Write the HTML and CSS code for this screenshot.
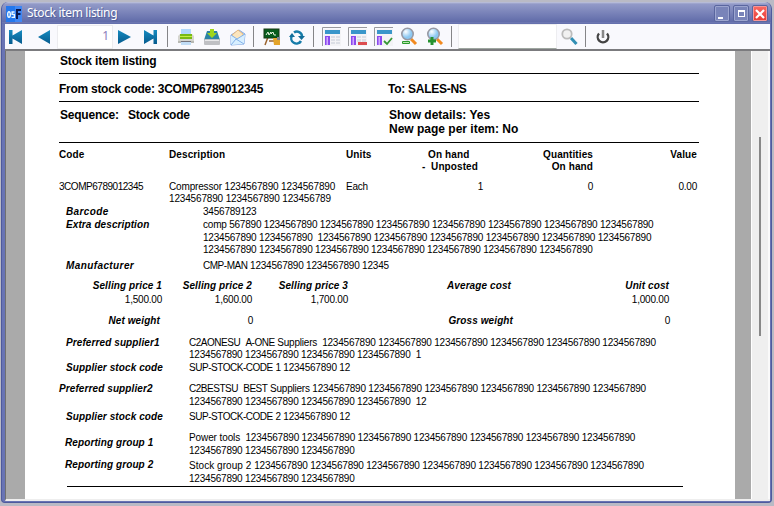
FILE: index.html
```html
<!DOCTYPE html>
<html lang="en">
<head>
<meta charset="utf-8">
<title>Stock item listing</title>
<link rel="stylesheet" href="styles.css">
</head>
<body>
<div class="window">
<header class="titlebar">
<svg class="logo" width="16" height="16" viewBox="0 0 16 16"><rect width="16" height="16" fill="#2377ed"/><rect x="9" width="7" height="16" fill="#4187f3"/><g fill="none" stroke="#eaf7ff" stroke-width="1.4"><ellipse cx="3" cy="8.5" rx="1.3" ry="2.8"/><path d="M8.6 6H6.1v2.4h2.2v3H5.5"/></g><path d="M11 13V4h4M11 8h3.5" fill="none" stroke="#0a174b" stroke-width="2"/></svg>
<h1>Stock item listing</h1>
<span class="win-btn"><i class="min"></i></span><span class="win-btn"><i class="max"></i></span><span class="win-btn close"><svg width="10" height="10" viewBox="0 0 10 10"><path d="M1 1l8 8M9 1L1 9" stroke="#fff" stroke-width="2.2"/></svg></span>
</header>
<nav class="toolbar">
<svg class="defs"><defs>
<linearGradient id="blue" x2="0" y2="1"><stop stop-color="#168bc0"/><stop offset="1" stop-color="#075b8e"/></linearGradient>
<radialGradient id="lens" cx=".35" cy=".3"><stop stop-color="#fff"/><stop offset="1" stop-color="#8cc8f2"/></radialGradient>
</defs></svg>
<svg class="first" width="14" height="16" viewBox="0 0 14 16"><path d="M0 1h3.5v5.5L13 1v14L3.5 9.500V15H0z" fill="url(#blue)"/></svg>
<svg class="prev" width="12" height="14" viewBox="0 0 12 14"><path d="M12 0v14L0 7z" fill="url(#blue)"/></svg>
<span class="page-no">1</span>
<svg class="next" width="13" height="14" viewBox="0 0 13 14"><path d="M0 0l13 7-13 7z" fill="url(#blue)"/></svg>
<svg class="last" width="13" height="16" viewBox="0 0 13 16"><path d="M13 1H9.500v5.500L0 1v14l9.500-5.500V15H13z" fill="url(#blue)"/></svg>
<i class="sep s1"></i>
<svg class="ic print" width="18" height="18" viewBox="0 0 18 18"><rect x="4" y="1" width="10" height="8" fill="#b1d8fb"/><path d="M1 8l2-2v3h12V6l2 2v7H1z" fill="#d5d5cf"/><path d="M3 6h12v5H3z" fill="#79ba14"/><path d="M3 8h12v1H3z" fill="#c5ed45"/><path d="M1 13h16v2H1z" fill="#b8b9b3"/><path d="M4 13h10v4H4z" fill="#c1ddf6"/><path d="M4 13h10v1H4z" fill="#74747d"/></svg>
<svg class="ic save" width="18" height="18" viewBox="0 0 18 18"><path d="M4 3h10l3 9H1z" fill="#2b83a6"/><rect x="1" y="11" width="16" height="6" rx="1" fill="#bfc0c4"/><path d="M2 12h14v1H2z" fill="#e8e8ea"/><path d="M7 1h4v4h3L9 10 4 5h3z" fill="#9fd51b"/></svg>
<svg class="ic mail" width="18" height="18" viewBox="0 0 18 18"><path d="M2 7l8-5 6 4-1 10-13 1z" fill="#b5dcf8" stroke="#88a9e3"/><path d="M3 7l6-5 5 4v4l-7 2-3-3z" fill="#fbe5be" stroke="#ebaf64" stroke-width=".8"/><path d="M2 7l6 4 8-5-1 10-13 1z" fill="#d8efff"/><path d="M2 7l6 4 8-5M2 17l5-6 8 5" fill="none" stroke="#82b0e8"/></svg>
<i class="sep s2"></i>
<svg class="ic board" width="18" height="18" viewBox="0 0 18 18"><path d="M5 9L2 17m4-4h7" stroke="#9b642f" stroke-width="1.5"/><rect x="1" y="1" width="15" height="9" fill="#075c1d" stroke="#163914"/><path d="M3 7l2-3 1 3 2-3v2l2-2 1 3h2" fill="none" stroke="#e6f3df"/><path d="M10 10h7v7h-6z" fill="#e4a42a"/><path d="M14 9h3v3h-3z" fill="#7b8394"/></svg>
<svg class="ic refresh" width="18" height="18" viewBox="0 0 18 18"><g fill="none" stroke="#177ca9" stroke-width="2.500"><path d="M5 4.500a5 5 0 0 1 8 4"/><path d="M3 7.500A5 5 0 0 0 12 13"/></g><path d="M9 8h7l-3.500 4zM0 9l3-4 3 4z" fill="#126d99"/></svg>
<i class="sep s3"></i>
<svg class="ic lay" width="19" height="19" viewBox="0 0 19 19"><path d="M.5 19V.5H19" fill="none" stroke="#98999e"/><rect x="2" y="2" width="17" height="17" fill="#f3f3f6"/><rect x="3" y="3" width="15" height="4" fill="#3996ca"/><rect x="3" y="9" width="5" height="9" fill="#8b4aee"/><rect x="4.500" y="10" width="1.500" height="8" fill="#d1aaff"/><rect x="9" y="9" width="9" height="8" fill="#dcdfe6"/><path d="M9 11.500h9M9 14.500h9M13.500 9v8" stroke="#f3f3f6"/></svg>
<svg class="ic lay" width="19" height="19" viewBox="0 0 19 19"><path d="M.5 19V.5H19" fill="none" stroke="#98999e"/><rect x="2" y="2" width="17" height="17" fill="#f3f3f6"/><rect x="3" y="3" width="15" height="4" fill="#3996ca"/><rect x="3" y="9" width="5" height="9" fill="#8b4aee"/><rect x="4.500" y="10" width="1.500" height="8" fill="#d1aaff"/><rect x="9" y="9" width="9" height="6" fill="#dcdfe6"/><path d="M9 11.500h9M13.500 9v6" stroke="#f3f3f6"/><rect x="10" y="15" width="9" height="3" fill="#dc4d50"/></svg>
<svg class="ic lay" width="19" height="19" viewBox="0 0 19 19"><path d="M.5 19V.5H19" fill="none" stroke="#98999e"/><rect x="2" y="2" width="17" height="17" fill="#f3f3f6"/><rect x="3" y="3" width="15" height="4" fill="#3996ca"/><rect x="3" y="9" width="5" height="9" fill="#8b4aee"/><rect x="4.500" y="10" width="1.500" height="8" fill="#d1aaff"/><path d="M10 14l3 3 5-6" fill="none" stroke="#369734" stroke-width="1.800"/></svg>
<svg class="ic zoomout" width="18" height="19" viewBox="0 0 18 19"><path d="M11 12l5 5" stroke="#f28a20" stroke-width="3"/><circle cx="7.500" cy="7" r="5.700" fill="url(#lens)" stroke="#9899a4" stroke-width="1.600"/><rect x="2" y="14" width="8" height="3" rx="1" fill="#2b9a2c"/><path d="M3 15.500h6" stroke="#b8e7af"/></svg>
<svg class="ic zoomin" width="18" height="19" viewBox="0 0 18 19"><path d="M11 12l5 5" stroke="#f28a20" stroke-width="3"/><circle cx="7.500" cy="7" r="5.700" fill="url(#lens)" stroke="#9899a4" stroke-width="1.600"/><path d="M2 14h8M6 10v8" stroke="#279230" stroke-width="3"/></svg>
<i class="sep s4"></i>
<span class="search-box"></span>
<svg class="ic find" width="17" height="17" viewBox="0 0 17 17"><path d="M10 10l5.500 6" stroke="#328fb4" stroke-width="3"/><circle cx="6" cy="6" r="4.700" fill="#f1f1f1" stroke="#bcbcbc" stroke-width="1.800"/></svg>
<i class="sep s5"></i>
<svg class="ic power" width="14" height="15" viewBox="0 0 14 15"><path d="M3 4.500a5.300 5.300 0 1 0 8 0" fill="none" stroke="#444" stroke-width="2.300"/><path d="M7 1v8" stroke="#888" stroke-width="2.500"/></svg>
</nav>
<main class="viewer">
<article class="page">
<section class="head">
<h2>Stock item listing</h2>
<div class="pair range"><b class="from">From stock code: 3COMP6789012345</b><b class="to">To: SALES-NS</b></div>
<div class="pair opts"><b class="sequence">Sequence:&nbsp; <span class="seq">Stock code</span></b><b>Show details: Yes<br>New page per item: No</b></div>
</section>
<div class="cols titles"><b>Code</b><b>Description</b><b>Units</b><b class="r unposted">On hand&nbsp;&nbsp;&nbsp;<br>-&nbsp; Unposted</b><b class="r">Quantities<br>On hand</b><b class="r">Value</b></div>
<div class="cols item"><span class="code">3COMP6789012345</span><span class="desc">Compressor 1234567890 1234567890<br>1234567890 1234567890 123456789</span><span>Each</span><span class="r">1</span><span class="r">0</span><span class="r">0.00</span></div>
<dl class="detail">
<dt class="wide">Barcode</dt><dd>3456789123</dd>
<dt class="extra">Extra description</dt><dd class="extra">comp 567890 1234567890 1234567890 1234567890 1234567890 1234567890 1234567890 1234567890<br>1234567890 1234567890 &nbsp;1234567890 1234567890 1234567890 1234567890 1234567890 1234567890<br>1234567890 1234567890 1234567890 1234567890 1234567890 1234567890 1234567890</dd>
<dt class="maker wide">Manufacturer</dt><dd class="maker"><span class="tight">CMP-MAN</span> 1234567890 1234567890 12345</dd>
</dl>
<div class="prices"><em>Selling price 1</em><em>Selling price 2</em><em>Selling price 3</em><em>Average cost</em><em>Unit cost</em>
<span>1,500.00</span><span>1,600.00</span><span>1,700.00</span><span></span><span>1,000.00</span></div>
<div class="weights"><em>Net weight</em><span>0</span><em>Gross weight</em><span>0</span></div>
<dl class="suppliers">
<dt>Preferred supplier1</dt><dd><span class="tight">C2AONESU</span> &nbsp;<span class="tight">A-ONE</span> Suppliers&nbsp; 1234567890 1234567890 1234567890 1234567890 1234567890 1234567890<br>1234567890 1234567890 1234567890 1234567890&nbsp; 1</dd>
<dt>Supplier stock code</dt><dd><span class="tight">SUP-STOCK-CODE</span> 1 1234567890 12</dd>
<dt class="out g2">Preferred supplier2</dt><dd class="g2"><span class="tight">C2BESTSU</span> &nbsp;<span class="tight">BEST</span> Suppliers 1234567890 1234567890 1234567890 1234567890 1234567890 1234567890<br>1234567890 1234567890 1234567890 1234567890&nbsp; 12</dd>
<dt class="g3">Supplier stock code</dt><dd class="g3"><span class="tight">SUP-STOCK-CODE</span> 2 1234567890 12</dd>
<dt class="rep g4">Reporting group 1</dt><dd class="g5"><span class="loose">Power tools&nbsp; </span>1234567890 1234567890 1234567890 1234567890 1234567890 1234567890 1234567890<br>1234567890 1234567890 1234567890</dd>
<dt class="rep g6">Reporting group 2</dt><dd class="g7"><span class="looser">Stock group 2 </span>1234567890 1234567890 1234567890 1234567890 1234567890 1234567890 1234567890<br>1234567890 1234567890 1234567890</dd>
</dl>
<hr>
</article>
<div class="scroll"><i></i></div>
</main>
</div>
</body>
</html>
```
FILE: styles.css
```css
*{box-sizing:border-box}
body{margin:0;width:774px;height:506px;overflow:hidden;background:#b9bac5;padding:2px 2px 3px 1px}
.window{height:501px;padding:0 4px 3px;border:solid #4e5a9d;border-width:0 1px 1px;border-radius:7px 7px 4px 4px;background:#6974b4;overflow:hidden}
.titlebar{height:22px;margin:0 -4px;padding:1px 3px 0 4px;display:flex;align-items:center;background:linear-gradient(#c2c6dc 0,#929ac8 2px,#606ba9 20px,#7881b8 21px,#5260a3);color:#fff}
h1{margin:0 auto 0 5px;font:12px/18px "Noto Sans","Open Sans",sans-serif;letter-spacing:-.33px;position:relative;top:-1px;text-shadow:1px 1px #535f9a}
.win-btn{width:16px;height:17px;margin-left:3px;border:1px solid #5a669f;border-radius:2px;box-shadow:inset 0 0 0 1px #9ca5cf;display:grid;place-items:center;background:#7984b9}
.close{background:linear-gradient(#fa6b65,#e83a35);box-shadow:inset 0 0 0 1px #f69697}
.min{width:5px;height:2px;background:#fff;margin:8px 4px 0 0}.max{width:7px;height:7px;border:1px solid #fff;border-top-width:2px}
.toolbar{height:27px;margin:0 -3px 0 -1px;padding-left:3px;display:flex;align-items:center;background:#f9f9fd;border-bottom:2px solid #7b7b7e;overflow:hidden}
.toolbar svg{flex:none}.defs{position:absolute;width:0;height:0}
.prev{margin-left:15px}.first{margin-left:1px}
.page-no{width:56px;height:24px;margin:0 5px 0 7px;padding:0 3px;border:1px solid #ececef;background:#fff;color:#8c7cbb;font:12px/19px "Noto Sans",sans-serif;text-align:right}
.last{margin-left:13px}.sep{flex:none;width:1px;height:21px;background:#858588}
.s1{margin:0 9px 0 10px}.save,.mail{margin-left:8px}.s2{margin:0 9px 0 6px}.refresh{margin-left:8px}.s3{margin:0 8px 0 6px}.lay{margin-right:7px}.zoomin{margin-left:8px}.s4{margin:0 6px 0 7px}
.search-box{width:99px;height:25px;background:#fff;border:1px solid #ededf0;border-bottom-color:#9fa7a1}
.find{margin-left:4px}.s5{margin:0 10px 0 7px}
.viewer{height:450px;display:flex;background:#aaa;border-left:1px solid #707070;border-bottom:2px solid #eee;margin:0 -3px 0 -1px}
.page{flex:none;width:710px;margin-left:19px;background:#fff;color:#000;font:10px/12.4px "Liberation Sans",Arial,sans-serif;letter-spacing:-.215px;white-space:nowrap}
.scroll{flex:none;width:19px;margin-left:16px;padding:86px 0 0 7px;background:#efefef;border-left:1px solid #fff;border-right:2px solid #fafafa}.scroll i{display:block;width:2px;height:199px;background:#888}
.head{width:640px;margin-left:34px;font:bold 12px/14px "Liberation Sans",Arial,sans-serif;letter-spacing:0}
h2{margin:0;height:23px;padding:3px 0 0 1px;font:inherit;letter-spacing:-.17px;border-bottom:1px solid #000}
.pair{display:grid;grid-template-columns:329px 1fr}.range{height:28px;padding-top:8px;border-bottom:1px solid #000}.opts{height:41px;padding:6px 0 0 1px;border-bottom:1px solid #000}.seq{margin-left:3px}
.from,.to{letter-spacing:-.27px}.sequence{letter-spacing:-.22px}
.cols{display:grid;grid-template-columns:110px 177px 61px 76px 110px 104px;margin-left:34px}.r{text-align:right}
.titles{height:32px;padding-top:6px;letter-spacing:.1px}.unposted{padding-right:5px}
.item{height:31px;padding-top:6px;align-content:start}.desc{letter-spacing:-.16px}.code,.tight{letter-spacing:-.47px}
dl{margin:0;display:grid;align-content:start}dd{margin:0}dt,em{font-weight:bold;font-style:italic;letter-spacing:.1px}
.wide{letter-spacing:.4px}.loose{letter-spacing:-.1px}.looser{letter-spacing:.05px}
.detail{grid-template-columns:137px 1fr;margin-left:41px;height:74px}.extra{margin-top:1px}.maker{margin-top:3px}
.prices{display:grid;grid-template-columns:137px 90px 96px 163px 158px;align-content:start;text-align:right;row-gap:2px;height:35px}
.weights{display:grid;grid-template-columns:134px 93px 260px 157px;text-align:right;height:22px;align-content:start;padding-left:1px}
.suppliers{grid-template-columns:123px 1fr;margin-left:41px}.out{margin-left:-7px}.rep{margin-left:-1px}
.g2{margin-top:9px}.g3{margin-top:3px}.g4{margin-top:14px}.g5{margin-top:9px}.g6{margin-top:2px}.g7{margin-top:3px}
hr{width:616px;height:1px;margin:1px 0 0 42px;border:0;background:#000}
```
